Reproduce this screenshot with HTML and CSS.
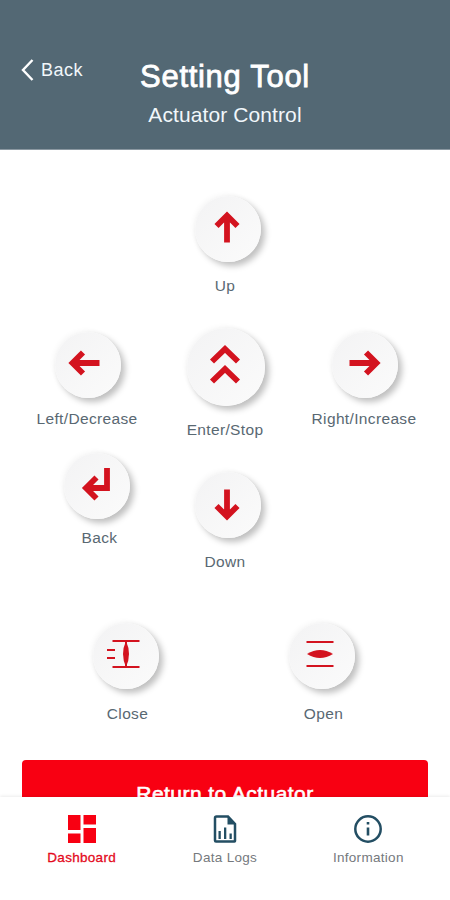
FILE: index.html
```
<!DOCTYPE html>
<html lang="en">
<head>
  <meta charset="UTF-8">
  <meta name="viewport" content="width=device-width, initial-scale=1.0">
  <title>Setting Tool - Actuator Control</title>
  <link rel="stylesheet" href="styles.css">
</head>
<body>
  <header class="header">
    <a class="back" href="#">
      <svg width="14" height="24" viewBox="0 0 14 24"><path d="M12.500 2L3 12l9.500 10"/></svg>
      <span>Back</span>
    </a>
    <div class="titles">
      <h1>Setting Tool</h1>
      <h2>Actuator Control</h2>
    </div>
  </header>

  <main class="content">
    <section class="pad">
      <div class="column side left">
        <div class="control">
          <button class="round"><svg class="arrow" width="32" height="32" viewBox="0 0 32 32"><path d="M31.500 16H5M15 5.500L4.500 16 15 26.500"/></svg></button>
          <span class="label">Left/Decrease</span>
        </div>
        <div class="control return">
          <button class="round"><svg class="arrow" width="30" height="34" viewBox="0 0 30 34"><path d="M26 1V21H5M15.500 10.500L5 21l10.500 10.500"/></svg></button>
          <span class="label">Back</span>
        </div>
      </div>
      <div class="column middle">
        <div class="control up">
          <button class="round"><svg class="arrow" width="32" height="32" viewBox="0 0 32 32"><path d="M16 31.500V5M5.500 15L16 4.500 26.500 15"/></svg></button>
          <span class="label">Up</span>
        </div>
        <div class="control enter">
          <button class="round large"><svg class="arrow" width="32" height="42" viewBox="0 0 32 42"><path d="M3 17.500L16 5l13 12.500M3 37.500L16 25l13 12.500"/></svg></button>
          <span class="label">Enter/Stop</span>
        </div>
        <div class="control down">
          <button class="round"><svg class="arrow" width="32" height="32" viewBox="0 0 32 32"><path d="M16 .5v26.500M5.500 17L16 27.500 26.500 17"/></svg></button>
          <span class="label">Down</span>
        </div>
      </div>
      <div class="column side right">
        <div class="control">
          <button class="round"><svg class="arrow" width="32" height="32" viewBox="0 0 32 32"><path d="M.5 16h26.500M17 5.500L27.500 16 17 26.500"/></svg></button>
          <span class="label">Right/Increase</span>
        </div>
      </div>
    </section>

    <section class="valves">
      <div class="control">
        <button class="round close"><svg class="valve" width="34" height="32" viewBox="0 0 34 32"><path d="M6.500 3h27M6.500 29h27M20 2v27M1 12h8M1 20h8"/><path class="disc" d="M20 3q6 13 0 26q-6-13 0-26z"/></svg></button>
        <span class="label">Close</span>
      </div>
      <div class="control">
        <button class="round"><svg class="valve" width="28" height="32" viewBox="0 0 28 32"><path d="M.5 4h27M.5 28h27"/><path class="disc" d="M1 16q13-8 26 0q-13 8-26 0z"/></svg></button>
        <span class="label">Open</span>
      </div>
    </section>

    <button class="return-button">Return to Actuator</button>
  </main>

  <nav class="tabs">
    <a class="tab active" href="#">
      <svg width="28" height="28" viewBox="0 0 28 28"><path d="M0 0h12.500v15H0zM15.500 0H28v9.500H15.500zM0 18.500h12.500V28H0zM15.500 13H28v15H15.500z"/></svg>
      <span>Dashboard</span>
    </a>
    <a class="tab logs" href="#">
      <svg width="24" height="28" viewBox="0 0 24 28"><path class="line" d="M3.500 1.500H15L22 9v17q0 .5-.5 .5H3q-1 0-1-1V3q0-1.500 1.500-1.500z"/><path d="M14.500 1L23 9.500h-8.500zM5.500 16h2.300v8H5.500zM11 12.500h2.300V24H11zM16.500 18.500h2.300V24h-2.300z"/></svg>
      <span>Data Logs</span>
    </a>
    <a class="tab info" href="#">
      <svg width="28" height="28" viewBox="0 0 28 28"><circle class="line" cx="14" cy="14" r="12.700"/><path d="M12.700 7h2.600v2.600h-2.600zM12.700 12.500h2.600v8h-2.600z"/></svg>
      <span>Information</span>
    </a>
  </nav>
</body>
</html>
```

FILE: styles.css
```
* { box-sizing: border-box; }
body { font-family: "Liberation Sans", Arial, sans-serif; background: #fff; margin: 0; height: 900px; overflow: hidden; display: flex; flex-direction: column; }
a { text-decoration: none; }
svg { display: block; flex: none; }
button { border: none; padding: 0; font-family: inherit; cursor: pointer; }

.header { flex: none; height: 150px; background: #536874; color: #fff; display: grid; grid-template-columns: 120px 210px 120px; border-bottom: 1px solid #8b98a1; }
.back { display: flex; align-items: center; gap: 7px; height: 24px; margin: 58px 0 0 20px; color: #f1f7fb; font-size: 18px; letter-spacing: 0.5px; }
.back path { fill: none; stroke: #fff; stroke-width: 2.4; }
.titles { padding-top: 59px; text-align: center; white-space: nowrap; }
.titles h1 { margin: 0; font-size: 31px; line-height: 36px; font-weight: normal; letter-spacing: 0.7px; -webkit-text-stroke: 0.8px #fff; }
.titles h2 { margin: 8px 0 0; font-size: 21px; line-height: 24px; font-weight: normal; color: #f1f7fb; letter-spacing: 0.1px; }

.content { flex: 1; min-height: 0; overflow: hidden; padding: 0 22px; }
.pad { display: grid; grid-template-columns: 130px 1fr 130px; height: 425px; }
.column { display: flex; flex-direction: column; align-items: center; }
.column.side { padding-top: 182px; }
.column.middle { padding-top: 46px; }
.control { display: flex; flex-direction: column; align-items: center; gap: 14px; }
.round { width: 66px; height: 66px; padding: 0 3px 4px 0; border-radius: 50%; background: linear-gradient(135deg, #f3f3f4, #fbfbfb); box-shadow: 4px 4px 6px rgba(0,0,0,0.25), -2px -2px 5px rgba(0,0,0,0.03); display: flex; align-items: center; justify-content: center; }
.round.large { width: 78px; height: 78px; }
.arrow path { fill: none; stroke: #d3131f; stroke-width: 5.8; }
.valve path { fill: none; stroke: #d3131f; stroke-width: 2; }
.valve .disc { fill: #d3131f; stroke: none; }
.label { font-size: 15.5px; line-height: 20px; color: #596872; letter-spacing: 0.35px; white-space: nowrap; }
.side .control { gap: 11px; }
.left .round { margin-left: 3px; padding-right: 8px; }
.right { padding-left: 2px; }
.right .round { margin-left: 1px; padding-right: 0; }
.side .return { margin-top: 24px; padding-left: 25px; gap: 9px; }
.return .round { margin: 0 5px 0 0; padding-right: 3px; }
.up .round, .down .round { margin-left: 6px; }
.enter { margin-top: 32px; }
.enter .round { margin-left: 2px; padding: 0 2px 5px 0; }
.down { margin-top: 32px; }
.down .round { padding-bottom: 0; }

.valves { display: grid; grid-template-columns: 196px 196px; justify-content: center; padding: 48px 0 0 1px; height: 184px; }
.valves .control { gap: 15px; }
.valves .round { margin-right: 3px; padding: 0 4px 4px 0; }
.valves .close { padding-right: 6px; }

.return-button { display: block; width: 406px; height: 68px; margin-top: 1px; border-radius: 4px; background: #f80012; color: #fff; font-size: 21px; line-height: 68px; letter-spacing: 0.45px; -webkit-text-stroke: 0.6px #fff; }

.tabs { flex: none; height: 103px; padding: 18px 10px 0; display: grid; grid-template-columns: repeat(3, 1fr); background: #fff; box-shadow: 0 -1px 3px rgba(0,0,0,0.08); z-index: 1; }
.tab { display: flex; flex-direction: column; align-items: center; gap: 6px; font-size: 13.5px; line-height: 18px; letter-spacing: 0.3px; color: #75797d; fill: #234e63; }
.tab .line { fill: none; stroke: #234e63; stroke-width: 2.5; }
.tab.active { color: #e40a1c; fill: #f80012; -webkit-text-stroke: 0.3px #e40a1c; }
```
